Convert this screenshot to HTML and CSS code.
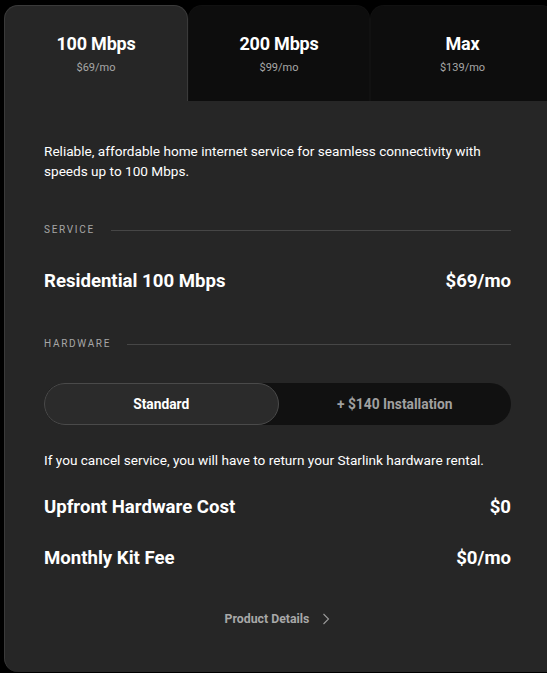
FILE: index.html
```html
<!DOCTYPE html>
<html lang="en">
<head>
<meta charset="utf-8">
<title>Plans</title>
<link rel="stylesheet" href="styles.css">
</head>
<body>
<div class="card">
  <div class="tabs">
    <div class="tab active">
      <div class="tab-title">100 Mbps</div>
      <div class="tab-price">$69/mo</div>
    </div>
    <div class="tab">
      <div class="tab-title">200 Mbps</div>
      <div class="tab-price">$99/mo</div>
    </div>
    <div class="tab">
      <div class="tab-title">Max</div>
      <div class="tab-price">$139/mo</div>
    </div>
  </div>
  <div class="panel">
    <p class="desc">Reliable, affordable home internet service for seamless connectivity with speeds up to 100 Mbps.</p>
    <div class="section-label"><span>SERVICE</span><div class="rule"></div></div>
    <div class="row big"><span>Residential 100 Mbps</span><span>$69/mo</span></div>
    <div class="section-label hw"><span>HARDWARE</span><div class="rule"></div></div>
    <div class="toggle">
      <div class="opt selected">Standard</div>
      <div class="opt">+ $140 Installation</div>
    </div>
    <p class="note">If you cancel service, you will have to return your Starlink hardware rental.</p>
    <div class="row big r1"><span>Upfront Hardware Cost</span><span>$0</span></div>
    <div class="row big r2"><span>Monthly Kit Fee</span><span>$0/mo</span></div>
    <div class="details">Product Details
      <svg class="chev" width="8" height="12" viewBox="0 0 8 12"><path d="M1.5 1 L6.5 6 L1.5 11" fill="none" stroke="#9a9a9a" stroke-width="1.1"/></svg>
    </div>
  </div>
</div>
</body>
</html>
```

FILE: styles.css
```css
html, body {
  margin: 0;
  padding: 0;
  background: #000;
  overflow: hidden;
}
body {
  font-family: "Roboto", "Liberation Sans", sans-serif;
  color: #fff;
  width: 547px;
  height: 673px;
}
.card {
  margin: 5px 0 0 4px;
  width: 551px;
}
.tabs {
  display: grid;
  grid-template-columns: 184px 182px 1fr;
  height: 95px;
  gap: 0;
}
.tab {
  background: #0d0d0d;
  border-radius: 14px 14px 0 0;
  display: flex;
  flex-direction: column;
  align-items: center;
  padding-top: 27px;
  box-sizing: border-box;
  border: 1px solid #111;
  border-bottom: none;
}
.tab.active {
  background: #262626;
  border: 1px solid #3a3a3a;
  border-bottom: none;
  position: relative;
  z-index: 1;
  height: 96px;
}
.tab-title {
  font-size: 18px;
  font-weight: 700;
  line-height: 22px;
  letter-spacing: -0.2px;
}
.tab-price {
  font-size: 11px;
  color: #a8a8a8;
  margin-top: 6px;
  line-height: 14px;
}
.panel {
  background: #262626;
  border-left: 1px solid #3a3a3a;
  border-radius: 0 0 0 14px;
  padding: 41px 44px 0 39px;
  height: 572px;
  box-sizing: border-box;
}
.desc {
  margin: 0;
  font-size: 13.6px;
  line-height: 20px;
  width: 462px;
}
.section-label {
  display: flex;
  align-items: center;
  gap: 16px;
  margin-top: 43px;
  font-size: 10px;
  letter-spacing: 1.7px;
  color: #a6a6a6;
  line-height: 12px;
}
.section-label .rule {
  flex: 1;
  height: 1px;
  background: #464646;
}
.row {
  display: flex;
  justify-content: space-between;
}
.big {
  font-size: 18.6px;
  font-weight: 700;
  line-height: 22px;
}
.section-label + .row {
  margin-top: 34px;
}
.section-label.hw {
  margin-top: 46px;
}
.toggle {
  margin-top: 33px;
  display: flex;
  height: 42px;
  background: #111;
  border-radius: 21px;
}
.opt {
  flex: 1;
  display: flex;
  align-items: center;
  justify-content: center;
  font-size: 13.8px;
  font-weight: 700;
  color: #a0a0a0;
  border-radius: 21px;
}
.opt.selected {
  background: #2b2b2b;
  border: 1px solid #4a4a4a;
  color: #fff;
}
.note {
  margin: 26px 0 0;
  font-size: 13.6px;
  line-height: 18px;
}
.r1 { margin-top: 27px; }
.r2 { margin-top: 29px; }
.details {
  margin-top: 43px;
  display: flex;
  align-items: center;
  justify-content: center;
  gap: 13px;
  font-size: 12.3px;
  font-weight: 700;
  color: #a8a8a8;
}
```
